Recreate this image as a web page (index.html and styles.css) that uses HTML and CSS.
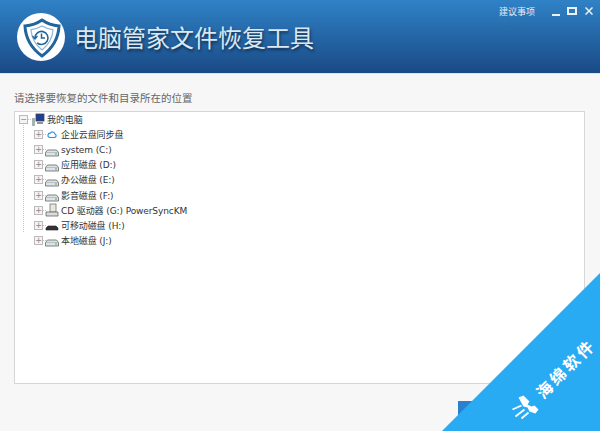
FILE: index.html
```html
<!DOCTYPE html>
<html lang="en">
<head>
  <meta charset="UTF-8" />
  <title>电脑管家文件恢复工具</title>
  <link rel="stylesheet" href="styles.css">
</head>
<body>
  <header class="top-bar">
    <div class="logo">
      <svg viewBox="0 0 48 48" width="48" height="48">
        <circle cx="24" cy="24" r="24" fill="#fff"/>
        <path d="M25 7c5 3.500 11 5.500 17 6-.5 12-6 22-17 30C14 35 8.500 25 8 13c6-.5 12-2.500 17-6z" fill="none" stroke="#21659c" stroke-width="3"/>
        <path d="M25 13c3.500 2 7 3.200 11 3.700-.5 8-4.500 15-11 20.300-6.500-5.300-10.500-12.300-11-20.300 4-.5 7.500-1.700 11-3.700z" fill="none" stroke="#8fb4cf" stroke-width="1.200"/>
        <path d="M18 25a6.500 6.500 0 1 1 2.200 4.800" fill="none" stroke="#21659c" stroke-width="1.600"/>
        <path d="M15.500 23l2.500 3 2.500-3" fill="none" stroke="#21659c" stroke-width="1.200"/>
        <path d="M24.500 20.500v4.500h3.500" fill="none" stroke="#21659c" stroke-width="1.500"/>
      </svg>
    </div>
    <h1 class="app-title">电脑管家文件恢复工具</h1>
    <div class="window-bar">
      <span class="suggest">建议事项</span>
      <span class="win-min"></span>
      <span class="win-max"></span>
      <svg class="win-close" viewBox="0 0 8 8" width="8" height="8"><path d="M.5.500l7 7M7.500.500l-7 7" stroke="#e8f1f8" stroke-width="1.500"/></svg>
    </div>
  </header>

  <main class="content">
    <p class="hint">请选择要恢复的文件和目录所在的位置</p>
    <div class="tree-box">
      <div class="tree-row tree-root">
        <span class="toggle">−</span>
        <span class="dots"></span>
        <svg class="icon" viewBox="0 0 14 14" width="14" height="14">
          <rect x="5" y="1" width="8" height="7" fill="#1b3f9c" stroke="#444" stroke-width="0.800"/>
          <rect x="6" y="9" width="6" height="2" fill="#8a9499"/>
          <rect x="1" y="5" width="3" height="8" fill="#a7b3b0"/>
        </svg>
        <span class="label">我的电脑</span>
      </div>
      <div class="tree-children" id="treeRows"></div>
    </div>
    <div class="footer">
      <button class="next-button">下一步</button>
    </div>
  </main>

  <div class="corner"></div>
  <div class="corner-mark">
    <svg class="mark-icon" viewBox="0 0 24 24" width="24" height="24">
      <g transform="translate(12 12) rotate(45) translate(-22 -22)">
        <path d="M15 12l5-2 6 6-2 3 4 2 3-1 4 4-3 4-6-2-2-4-4-1z" fill="#fff"/>
        <path d="M18 20l-9 4M21 24l-9 7M25 27l-7 6" fill="none" stroke="#fff" stroke-width="1.800"/>
      </g>
    </svg>
    <span class="mark-text">海绵软件</span>
  </div>

  <script>
    const DRIVES = [
      { name: "企业云盘同步盘", icon: "cloud" },
      { name: "system (C:)", icon: "disk" },
      { name: "应用磁盘 (D:)", icon: "disk" },
      { name: "办公磁盘 (E:)", icon: "disk" },
      { name: "影音磁盘 (F:)", icon: "disk" },
      { name: "CD 驱动器 (G:) PowerSyncKM", icon: "cd" },
      { name: "可移动磁盘 (H:)", icon: "usb" },
      { name: "本地磁盘 (J:)", icon: "disk" }
    ];

    const ICONS = {
      cloud: '<path d="M4.500 9.500h5a1.800 1.800 0 0 0 .4-3.500 2.500 2.500 0 0 0-4.600-.8A2.200 2.200 0 0 0 4.500 9.500z" fill="#fff" stroke="#2d8fe0" stroke-width="1.200"/>',
      disk: '<path d="M2.500 7h9l2 2.500V13H.5V9.500z" fill="#dfe3e6" stroke="#6d7675" stroke-width="0.900"/><path d="M1 9.500h12" stroke="#a9b0b0" stroke-width="0.700"/><rect x="10" y="10.500" width="2" height="1" fill="#5a6"/>',
      cd: '<rect x="5" y="1" width="6" height="8" fill="#e8e8dc" stroke="#777" stroke-width="0.800"/><path d="M1 9h12v4H1z" fill="#d8dcdc" stroke="#666" stroke-width="0.800"/>',
      usb: '<path d="M1 10l2-2h8l2 2v2H1z" fill="#333" stroke="#222" stroke-width="0.600"/>'
    };

    const holder = document.getElementById("treeRows");
    DRIVES.forEach(drive => {
      const row = document.createElement("div");
      row.className = "tree-row";
      row.innerHTML = `
        <span class="toggle">+</span>
        <span class="dots"></span>
        <svg class="icon" viewBox="0 0 14 14" width="14" height="14">${ICONS[drive.icon]}</svg>
        <span class="label">${drive.name}</span>
      `;
      holder.appendChild(row);
    });
  </script>
</body>
</html>
```

FILE: styles.css
```css
body {
  margin: 0;
  height: 431px;
  overflow: hidden;
  position: relative;
  background-color: #f7f7f7;
  font-family: "Noto Sans CJK SC", "Liberation Sans", sans-serif;
  color: #333;
  display: flex;
  flex-direction: column;
}

.top-bar {
  height: 74px;
  flex-shrink: 0;
  display: flex;
  align-items: center;
  padding-left: 17px;
  box-sizing: border-box;
  background: linear-gradient(#2f82c6, #1a4a86);
  border-bottom: 1px solid #e4e4e4;
  position: relative;
}

.logo {
  width: 48px;
  height: 48px;
}

.app-title {
  margin: 0 0 0 9px;
  font-size: 24px;
  font-weight: 400;
  color: #dbe8f3;
  text-shadow: 1px 2px 3px rgba(0, 0, 0, 0.55);
}

.window-bar {
  position: absolute;
  top: 4px;
  right: 7px;
  display: flex;
  align-items: center;
  height: 14px;
}

.suggest {
  font-size: 9px;
  color: #e2edf6;
  margin-right: 17px;
}

.win-min {
  width: 8px;
  height: 2px;
  background-color: #e8f1f8;
  margin-top: 7px;
  margin-right: 7px;
}

.win-max {
  width: 6px;
  height: 4px;
  border: 2px solid #e8f1f8;
  margin-right: 8px;
}

.content {
  flex: 1;
  display: flex;
  flex-direction: column;
  padding: 0 15px 0 14px;
}

.hint {
  margin: 16px 0 6px;
  font-size: 10.5px;
  line-height: 15px;
  color: #666;
}

.tree-box {
  height: 273px;
  box-sizing: border-box;
  background-color: #fff;
  border: 1px solid #d6d6d6;
  padding: 0 0 0 4px;
}

.tree-children {
  position: relative;
}

.tree-children::before {
  content: "";
  position: absolute;
  left: 4px;
  top: -8px;
  height: 113px;
  border-left: 1px dotted #c4c4c4;
}

.tree-row {
  display: flex;
  align-items: center;
  height: 15.1px;
  margin-left: 15px;
  font-family: "DejaVu Sans", "Noto Sans CJK SC", sans-serif;
  font-size: 9px;
  letter-spacing: -0.1px;
  color: #333;
  position: relative;
}

.tree-root {
  margin-left: 0;
}

.toggle {
  width: 7px;
  height: 7px;
  border: 1px solid #bbb;
  font-size: 8px;
  line-height: 7px;
  text-align: center;
  color: #888;
  background-color: #f4f4f4;
  position: relative;
  z-index: 1;
}

.dots {
  width: 3px;
  border-top: 1px dotted #c4c4c4;
}

.tree-children .icon {
  margin-left: -1px;
}

.label {
  white-space: nowrap;
  margin-left: 2px;
}

.footer {
  flex: 1;
  display: flex;
  justify-content: flex-end;
  padding-top: 17px;
}

.next-button {
  width: 127px;
  height: 30px;
  background-color: #2a7fcf;
  color: white;
  border: none;
  font-size: 11px;
  padding: 0;
}

.corner {
  position: absolute;
  right: 0;
  bottom: 0;
  width: 158px;
  height: 158px;
  background-color: #29abf4;
  clip-path: polygon(100% 0, 100% 100%, 0 100%);
}

.corner-mark {
  position: absolute;
  left: 517px;
  top: 404px;
  display: flex;
  align-items: center;
  gap: 6px;
  transform: rotate(-45deg);
  transform-origin: left center;
  color: #fff;
  font-size: 16px;
  font-weight: 700;
  white-space: nowrap;
}

.mark-text {
  line-height: 16px;
  letter-spacing: 3px;
}

.mark-icon {
  overflow: visible;
}
```
